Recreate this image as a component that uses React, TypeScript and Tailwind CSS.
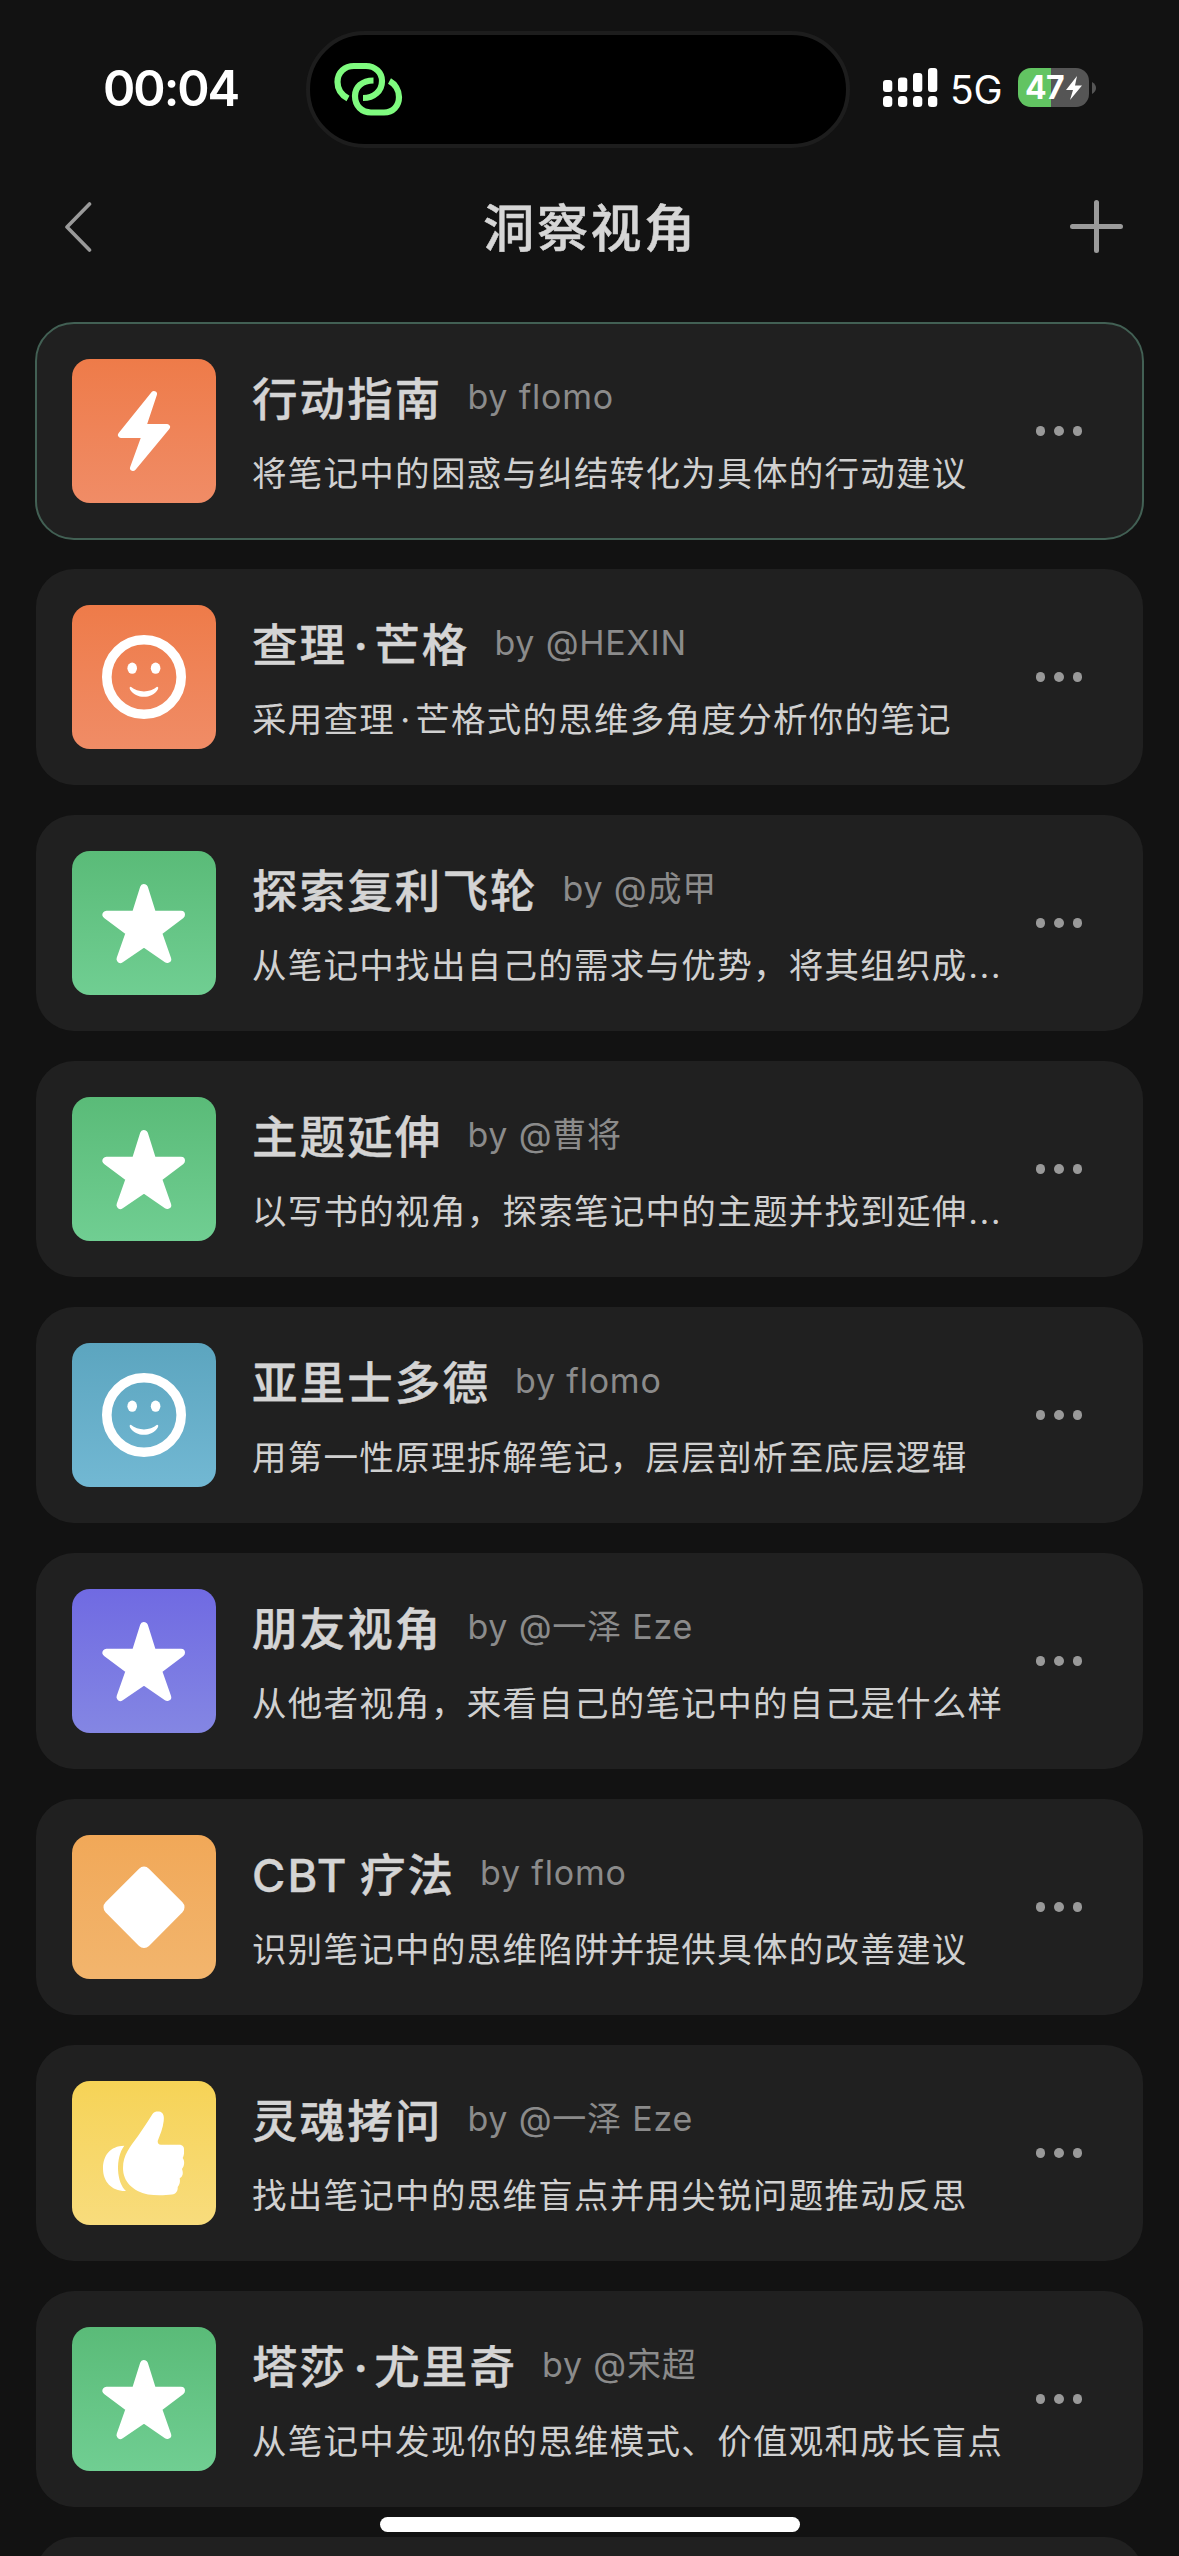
import type { ReactNode } from "react";

type Lens = {
  title: string;
  author: string;
  desc: string;
  icon: ReactNode;
  tile: string;
  active?: boolean;
};

const ORANGE = "bg-linear-to-b from-[#ee7b49] to-[#f08c66]";
const GREEN = "bg-linear-to-b from-[#5abb78] to-[#70ce92]";
const BLUE = "bg-linear-to-b from-[#5ca5bf] to-[#72b8d3]";
const PURPLE = "bg-linear-to-b from-[#706ae2] to-[#8486e3]";
const AMBER = "bg-linear-to-b from-[#f1a858] to-[#f2b56d]";
const YELLOW = "bg-linear-to-b from-[#f6d356] to-[#f8dc7c]";

function Bolt() {
  return (
    <svg viewBox="0 0 144 144" className="size-full" fill="#fff" stroke="#fff" strokeWidth="6" strokeLinejoin="round">
      <path d="M82 35 L49 76 L73 76 L61 109 L95 68 L71 68 Z" />
    </svg>
  );
}

function Smile() {
  return (
    <svg viewBox="0 0 144 144" className="size-full" fill="#fff">
      <circle cx="72" cy="72" r="37.2" fill="none" stroke="#fff" strokeWidth="9.6" />
      <ellipse cx="60.2" cy="63.2" rx="4.8" ry="5.6" />
      <ellipse cx="83.6" cy="63.2" rx="4.8" ry="5.6" />
      <path d="M58.8 81.8 C66 88 78 88 85 81.8 Q87 81.8 85.8 84.5 C80 94.3 64 94.3 58 84.5 Q57 81.8 58.8 81.8 Z" />
    </svg>
  );
}

function Star() {
  return (
    <svg viewBox="0 0 144 144" className="size-full" fill="#fff" stroke="#fff" strokeWidth="8" strokeLinejoin="round">
      <path d="M72 37 L80.4 63.7 L109 63.7 L85.8 81.3 L95.2 108 L72 92 L48.5 108 L57.9 81.3 L34.5 63.7 L63.6 63.7 Z" />
    </svg>
  );
}

function Diamond() {
  return (
    <svg viewBox="0 0 144 144" className="size-full" fill="#fff" stroke="#fff" strokeWidth="14" strokeLinejoin="round">
      <path d="M72 38.6 L105.5 72.2 L72 106 L38.5 72.2 Z" />
    </svg>
  );
}

function Thumb() {
  return (
    <svg viewBox="0 0 144 144" className="size-full" fill="#fff">
      <path d="M52.3 64.8 C38 65 31 75 31 87.5 C31 101 40 110.5 54 110 C44.5 102 43 77 52.3 64.8 Z" />
      <path d="M80.5 33 C82 31 84 30.5 87 30.6 C91 31 92.5 35 91.7 40 C91 47 88 54 85.7 60 Q85.5 63.7 89 63.7 L107 63.7 C111 63.7 112.5 66 112 70 C112.3 73 111.5 75.5 110.7 77 C113 80 112.5 85 110 88 C111.5 92 111 95.5 107.7 97.3 C108.5 101 107.5 104 105.7 106 C106 110 104 113 100 113.5 C93 114.5 84 114.7 76 113.6 C61 110 51 101 51 87 C51 74 58 66 66 55 C71 48 76 40 80.5 33 Z" />
    </svg>
  );
}

const lenses: Lens[] = [
  { title: "行动指南", author: "flomo", desc: "将笔记中的困惑与纠结转化为具体的行动建议", icon: <Bolt />, tile: ORANGE, active: true },
  { title: "查理·芒格", author: "@HEXIN", desc: "采用查理·芒格式的思维多角度分析你的笔记", icon: <Smile />, tile: ORANGE },
  { title: "探索复利飞轮", author: "@成甲", desc: "从笔记中找出自己的需求与优势，将其组织成…", icon: <Star />, tile: GREEN },
  { title: "主题延伸", author: "@曹将", desc: "以写书的视角，探索笔记中的主题并找到延伸…", icon: <Star />, tile: GREEN },
  { title: "亚里士多德", author: "flomo", desc: "用第一性原理拆解笔记，层层剖析至底层逻辑", icon: <Smile />, tile: BLUE },
  { title: "朋友视角", author: "@一泽 Eze", desc: "从他者视角，来看自己的笔记中的自己是什么样", icon: <Star />, tile: PURPLE },
  { title: "CBT 疗法", author: "flomo", desc: "识别笔记中的思维陷阱并提供具体的改善建议", icon: <Diamond />, tile: AMBER },
  { title: "灵魂拷问", author: "@一泽 Eze", desc: "找出笔记中的思维盲点并用尖锐问题推动反思", icon: <Thumb />, tile: YELLOW },
  { title: "塔莎·尤里奇", author: "@宋超", desc: "从笔记中发现你的思维模式、价值观和成长盲点", icon: <Star />, tile: GREEN },
];

// The middle dot is narrow in the UI font, so it gets its own box
function Dotted({ text, dot }: { text: string; dot: string }) {
  return (
    <>
      {text.split("·").map((part, i) => (
        <span key={i}>
          {i > 0 && <span className={"inline-block text-center font-['Inter'] tracking-normal " + dot}>·</span>}
          {part}
        </span>
      ))}
    </>
  );
}

function LensCard({ lens }: { lens: Lens }) {
  return (
    <div className={"flex h-[216px] shrink-0 items-center rounded-[38px] bg-[#202020] pl-9 pr-[61px] " +
      (lens.active ? "outline-2 -outline-offset-1 outline-[#426054]" : "")}>
      <div className={"size-36 shrink-0 rounded-[18px] " + lens.tile}>{lens.icon}</div>
      <div className="ml-9 flex w-[770px] flex-col pt-[5px] whitespace-nowrap">
        <div className="flex h-[60px] items-center">
          <h2 className="text-[45.5px] leading-[60px] font-medium tracking-[2.1px] text-[#d4d4d4] [-webkit-text-stroke:0.4px] [word-spacing:-3px]">
            <Dotted text={lens.title} dot="w-[27px] font-semibold" />
          </h2>
          <span className="-mt-[5px] ml-[25px] text-[34px] leading-[60px] tracking-[0.8px] text-[#8b8b8b]">by {lens.author}</span>
        </div>
        <p className="mt-[20px] h-[48px] text-[34.5px] leading-[48px] tracking-[1.28px] text-[#d0d0d0]">
          <Dotted text={lens.desc.replace("…", "")} dot="w-[20px]" />
          {lens.desc.endsWith("…") && <span className="text-[40px] leading-none font-light tracking-normal">…</span>}
        </p>
      </div>
      <button className="ml-auto flex gap-[9px]">
        <span className="size-[9.5px] rounded-full bg-[#999]" />
        <span className="size-[9.5px] rounded-full bg-[#999]" />
        <span className="size-[9.5px] rounded-full bg-[#999]" />
      </button>
    </div>
  );
}

function Signal() {
  return (
    <svg width="55" height="39" viewBox="0 0 55 39" fill="#fff">
      <rect x="0" y="12" width="9.3" height="12" rx="3" />
      <rect x="15" y="9.5" width="9.3" height="14.5" rx="3" />
      <rect x="30" y="5" width="9.3" height="19" rx="3" />
      <rect x="45" y="0" width="9.3" height="24" rx="3" />
      <rect x="0" y="28" width="9.3" height="11" rx="3.5" />
      <rect x="15" y="28" width="9.3" height="11" rx="3.5" />
      <rect x="30" y="28" width="9.3" height="11" rx="3.5" />
      <rect x="45" y="28" width="9.3" height="11" rx="3.5" />
    </svg>
  );
}

function StatusBar() {
  return (
    <header className="flex h-[175px] shrink-0 items-center">
      <span className="ml-[103px] w-[203px] pt-[2px] text-[49px] font-semibold tracking-[-2px] text-white">00:04</span>
      <div className="mt-1 flex h-[117px] w-[544px] shrink-0 items-center rounded-full border-4 border-[#1d1d1d] bg-black">
        <svg width="69" height="55" viewBox="0 0 69 55" className="ml-6" fill="none" stroke="#7ffb7f" strokeWidth="6.2">
          <path d="M14 36.5 C7.5 33 3.5 27 3.5 20 C3.5 10 11 4 20 4 L32 4 C41 4 48 10.5 48 19 C48 29 40 36 29 36" />
          <path d="M39.5 18.5 C28 18.5 21 25 21 34 C21 44 28 50.5 37 50.5 L50 50.5 C59 50.5 65 44 65 35 C65 28 61 22 55.5 19" />
        </svg>
      </div>
      <div className="ml-[33px] flex items-center">
        <Signal />
        <span className="ml-[12px] w-[52px] pt-[3px] text-[39px] leading-none tracking-[-0.2px] whitespace-nowrap text-white">5G</span>
        <div className="ml-[16px] flex h-[39px] w-[71px] items-center justify-center gap-[2px] rounded-[13px] bg-linear-to-r from-[#62c462] from-46% to-[#555] to-46%">
          <span className="text-[32px] leading-none font-bold tracking-[-0.6px] text-white">47</span>
          <svg width="16" height="24" viewBox="0 0 16 24" fill="#fff">
            <path d="M11 0 L0 14 L7 14 L4 24 L16 9.5 L9 9.5 Z" />
          </svg>
        </div>
        <svg width="4" height="12" viewBox="0 0 4 12" className="ml-[3px]" fill="#555">
          <path d="M0 0 Q4 2.5 4 6 Q4 9.5 0 12 Z" />
        </svg>
      </div>
    </header>
  );
}

export default function App() {
  return (
    <div lang="zh-CN" className="relative flex h-[2556px] w-[1179px] flex-col overflow-hidden bg-[#121212] font-['Inter','Noto_Sans_CJK_SC',sans-serif]">
      <StatusBar />
      <nav className="flex h-[103px] shrink-0 items-center justify-between pr-[56px] pl-[64px]">
        <svg width="29" height="50" viewBox="0 0 29 50" fill="none" stroke="#9a9a9a" strokeWidth="3.6" strokeLinecap="round" strokeLinejoin="round">
          <path d="M25.5 2 L3 25 L25.5 48" />
        </svg>
        <h1 className="ml-[18px] pt-[5px] text-[51px] font-medium tracking-[2.6px] text-[#d6d6d6] [-webkit-text-stroke:0.5px]">洞察视角</h1>
        <svg width="53" height="53" viewBox="0 0 53 53" stroke="#9a9a9a" strokeWidth="5" strokeLinecap="round">
          <path d="M26.5 2.5 V50.5 M2.5 26.5 H50.5" />
        </svg>
      </nav>
      <main className="flex flex-col gap-[30px] px-9 pt-[45px]">
        {lenses.map((l) => <LensCard key={l.title} lens={l} />)}
        <div className="h-[216px] shrink-0 rounded-[38px] bg-[#202020]" />
      </main>
      <div className="absolute bottom-[24px] left-[380px] h-[15px] w-[420px] rounded-full bg-white" />
    </div>
  );
}
